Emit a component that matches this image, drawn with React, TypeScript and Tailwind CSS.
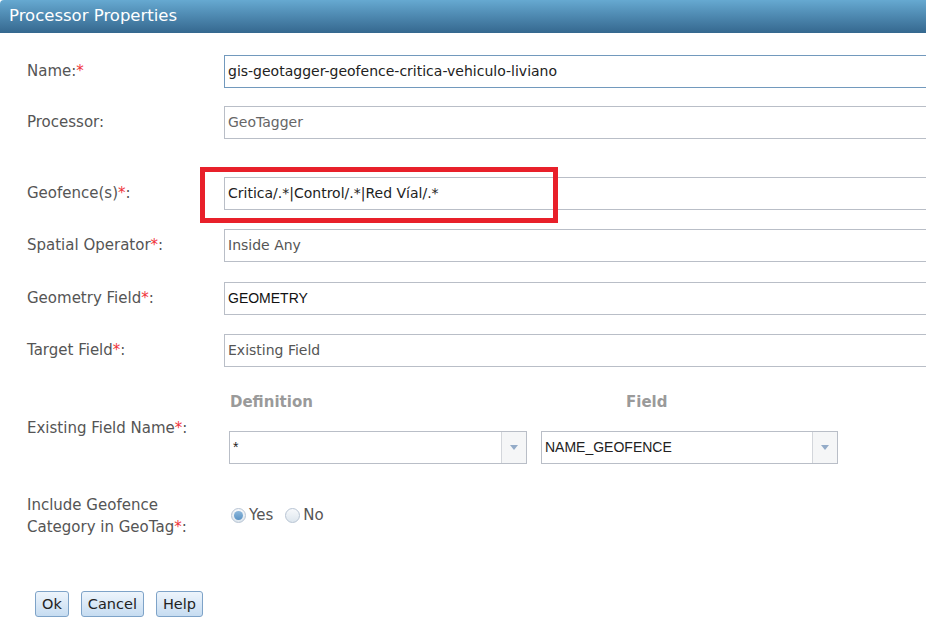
import React from "react";

const labelFont = { fontFamily: '"DejaVu Sans", Verdana, sans-serif' };

function Req() {
  return <span className="text-[#f0353b]">*</span>;
}

function Field({
  value,
  focused,
  textClass = "text-[#555]",
  narrow,
}: {
  value: string;
  focused?: boolean;
  textClass?: string;
  narrow?: boolean;
}) {
  return (
    <div
      className={`h-[33px] w-[720px] shrink-0 flex items-center pl-[3px] bg-white border ${
        focused ? "border-[#7299bd]" : "border-[#b9bec7]"
      } ${textClass} ${narrow ? "text-[14px] font-['Liberation_Sans',Arial,sans-serif]" : "text-[14px]"}`}
    >
      {value}
    </div>
  );
}

function Select({ value, width }: { value: string; width: string }) {
  return (
    <div className={`h-[33px] ${width} flex items-stretch bg-white border border-[#b9bec7]`}>
      <div className="flex-1 flex items-center pl-[3px] text-[14px] text-[#222] font-['Liberation_Sans',Arial,sans-serif]">
        {value}
      </div>
      <div className="w-[25px] border-l border-[#d3d6db] bg-[#f5f6f7] flex items-center justify-center">
        <svg width="8" height="5" viewBox="0 0 8 5">
          <path d="M0 0 L8 0 L4 5 Z" fill="#93abc8" />
        </svg>
      </div>
    </div>
  );
}

function Radio({ checked }: { checked?: boolean }) {
  return (
    <span className="w-[15px] h-[15px] rounded-full border border-[#b7c4d3] bg-gradient-to-b from-[#f7f9fb] to-[#dde6ee] flex items-center justify-center">
      {checked && (
        <span className="w-[9px] h-[9px] rounded-full bg-gradient-to-b from-[#8db8dc] to-[#5b93c4]" />
      )}
    </span>
  );
}

function Btn({ children }: { children: React.ReactNode }) {
  return (
    <button className="h-[26px] px-[6px] rounded-[3px] border border-[#7ea3c8] bg-gradient-to-b from-[#eef5fc] to-[#c6dcf1] text-[14.5px] text-[#222] leading-none">
      {children}
    </button>
  );
}

export default function App() {
  return (
    <div className="w-[926px] h-[638px] overflow-hidden bg-white" style={labelFont}>
      <div className="h-[33px] rounded-tl-[4px] bg-gradient-to-b from-[#66a9d1] to-[#35688f] flex items-center pl-[9px] text-white text-[16.5px]">
        Processor Properties
      </div>

      <div className="relative pl-[27px] pt-[22px]">
        <div className="flex items-center">
          <div className="w-[197px] shrink-0 text-[15px] text-[#555]">
            Name:<Req />
          </div>
          <Field
            value="gis-geotagger-geofence-critica-vehiculo-liviano"
            focused
            textClass="text-[#222]"
          />
        </div>

        <div className="flex items-center mt-[18px]">
          <div className="w-[197px] shrink-0 text-[15px] text-[#555]">Processor:</div>
          <Field value="GeoTagger" textClass="text-[#666]" />
        </div>

        <div className="flex items-center mt-[38px]">
          <div className="w-[197px] shrink-0 text-[15px] text-[#555]">
            Geofence(s)<Req />:
          </div>
          <Field value="Critica/.*|Control/.*|Red Víal/.*" textClass="text-[#222]" />
        </div>

        <div className="flex items-center mt-[19px]">
          <div className="w-[197px] shrink-0 text-[15px] text-[#555]">
            Spatial Operator<Req />:
          </div>
          <Field value="Inside Any" />
        </div>

        <div className="flex items-center mt-[20px]">
          <div className="w-[197px] shrink-0 text-[15px] text-[#555]">
            Geometry Field<Req />:
          </div>
          <Field value="GEOMETRY" narrow textClass="text-[#111]" />
        </div>

        <div className="flex items-center mt-[19px]">
          <div className="w-[197px] shrink-0 text-[15px] text-[#555]">
            Target Field<Req />:
          </div>
          <Field value="Existing Field" />
        </div>

        <div className="flex mt-[24px]">
          <div className="w-[197px] shrink-0 text-[15px] text-[#555] pt-[26px]">
            Existing Field Name<Req />:
          </div>
          <div className="flex flex-col pl-[5px]">
            <div className="flex text-[15px] font-bold text-[#9a9a9a] h-[22px] items-center">
              <div className="w-[397px] pl-[1px]">Definition</div>
              <div>Field</div>
            </div>
            <div className="flex gap-[14px] mt-[18px]">
              <Select value="*" width="w-[298px]" />
              <Select value="NAME_GEOFENCE" width="w-[297px]" />
            </div>
          </div>
        </div>

        <div className="flex items-center mt-[30px]">
          <div className="w-[197px] shrink-0 text-[15px] text-[#555] leading-[22px]">
            Include Geofence
            <br />
            Category in GeoTag<Req />:
          </div>
          <div className="flex items-center pl-[7px] text-[15px] text-[#555] -mt-[1px]">
            <Radio checked />
            <span className="ml-[3px]">Yes</span>
            <span className="ml-[12px]">
              <Radio />
            </span>
            <span className="ml-[3px]">No</span>
          </div>
        </div>

        <div className="flex gap-[12px] mt-[53px] pl-[8px]">
          <Btn>Ok</Btn>
          <Btn>Cancel</Btn>
          <Btn>Help</Btn>
        </div>

        <div className="absolute left-[200px] top-[134px] w-[358px] h-[56px] border-[5px] border-[#e8202a] pointer-events-none" />
      </div>
    </div>
  );
}
